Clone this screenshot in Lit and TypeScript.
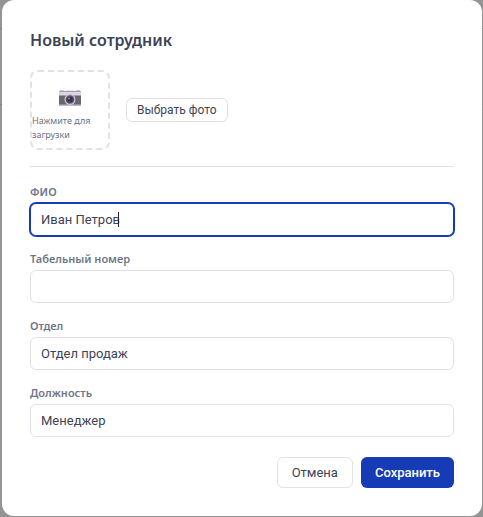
import { LitElement, html, css } from "lit";
import { customElement, property, query, state } from "lit/decorators.js";

interface Field {
  id: string;
  label: string;
  value: string;
}

@customElement("text-field")
class TextField extends LitElement {
  static styles = css`
    :host {
      display: block;
    }
    .label {
      display: block;
      margin-bottom: 2px;
      font-family: "Noto Sans", sans-serif;
      font-size: 11px;
      font-weight: 600;
      line-height: 18px;
      color: #6f7689;
    }
    .box {
      position: relative;
    }
    .input {
      display: block;
      box-sizing: border-box;
      width: 100%;
      height: 33px;
      padding: 0 10px;
      border: 1px solid #e1e1e8;
      border-radius: 6px;
      outline: none;
      background: #fff;
      font-family: Roboto, sans-serif;
      font-size: 13px;
      color: #3c4356;
      caret-color: transparent;
    }
    .input.active {
      border-color: #153cb4;
      box-shadow: 0 0 0 1px #153cb4;
    }
    .caret {
      position: absolute;
      top: 9px;
      width: 1px;
      height: 15px;
      background: #1f2430;
      pointer-events: none;
    }
  `;

  @property() name = "";
  @property() label = "";
  @property() value = "";
  @property({ type: Boolean }) active = false;
  @state() private caretX = 11;
  @query("input") private input!: HTMLInputElement;

  updated() {
    if (!this.active) return;
    const ctx = document.createElement("canvas").getContext("2d");
    if (!ctx) return;
    const style = getComputedStyle(this.input);
    ctx.font = `${style.fontSize} ${style.fontFamily}`;
    const end = this.value.slice(0, this.input.selectionEnd ?? undefined);
    this.caretX = 10 + Math.floor(ctx.measureText(end).width);
  }

  private sync = () => {
    this.value = this.input.value;
    this.requestUpdate();
  };

  render() {
    return html`
      <label class="label" for=${this.name}>${this.label}</label>
      <div class="box">
        <input
          class="input ${this.active ? "active" : ""}"
          id=${this.name}
          type="text"
          autocomplete="off"
          .value=${this.value}
          @input=${this.sync}
          @keyup=${this.sync}
          @focus=${() => (this.active = true)}
          @blur=${() => (this.active = false)}
        />
        ${this.active
          ? html`<span class="caret" style="left:${this.caretX}px"></span>`
          : null}
      </div>
    `;
  }
}

@customElement("app-root")
class AppRoot extends LitElement {
  static styles = css`
    :host {
      display: block;
      box-sizing: border-box;
      min-height: 100vh;
      padding: 0 1px 1px 2px;
      background: linear-gradient(
        #949494 28px,
        #858585 28px 29px,
        #949494 29px 104px,
        #858585 104px 105px,
        #949494 105px
      );
    }
    .dialog {
      padding: 28px;
      border-radius: 12px;
      background: #fff;
      color: #3c4356;
      font-family: "Noto Sans", sans-serif;
    }
    .title {
      margin: 0 0 18px;
      font-size: 16px;
      font-weight: 600;
      line-height: 24px;
    }
    .photo {
      display: flex;
      align-items: center;
      gap: 16px;
      padding-bottom: 16px;
      margin-bottom: 16px;
      border-bottom: 1px solid #e1e1e8;
    }
    .drop {
      display: flex;
      flex-direction: column;
      align-items: center;
      justify-content: center;
      gap: 2px;
      box-sizing: border-box;
      width: 80px;
      height: 80px;
      padding: 6px 0 0;
      border: 2px dashed #e1e1e8;
      border-radius: 8px;
      background: #fff;
      color: #6b7085;
      font-family: "Noto Sans", sans-serif;
      font-size: 9px;
      line-height: 14px;
      text-align: left;
    }
    .camera {
      width: 24px;
      height: 28px;
    }
    .hint {
      width: 100%;
    }
    .fields {
      display: grid;
      gap: 14px;
    }
    .actions {
      display: flex;
      justify-content: flex-end;
      gap: 8px;
      margin-top: 20px;
    }
    .btn {
      height: 31px;
      padding: 0 14px;
      border: 1px solid #e1e1e8;
      border-radius: 6px;
      background: #fff;
      color: #3c4356;
      font-family: Roboto, sans-serif;
      font-size: 13px;
    }
    .btn.small {
      height: 24px;
      padding: 0 10px;
      font-size: 12px;
    }
    .btn.primary {
      border: none;
      background: #153cb4;
      color: #fff;
      font-weight: 500;
    }
  `;

  private fields: Field[] = [
    { id: "name", label: "ФИО", value: "Иван Петров" },
    { id: "number", label: "Табельный номер", value: "" },
    { id: "department", label: "Отдел", value: "Отдел продаж" },
    { id: "position", label: "Должность", value: "Менеджер" },
  ];

  render() {
    return html`
      <form
        class="dialog"
        role="dialog"
        aria-labelledby="title"
        @submit=${(e: Event) => e.preventDefault()}
      >
        <h1 class="title" id="title">Новый сотрудник</h1>
        <div class="photo">
          <button class="drop" type="button">
            <svg class="camera" viewBox="0 0 24 28" aria-hidden="true">
              <path d="M2 6h4v2H2zM18 6h4v2h-4z" fill="#c9c4d3" />
              <path d="M8 6h8l1 3H7z" fill="#e6e0ee" />
              <rect x="1" y="7" width="22" height="15" rx="1" fill="#69656f" />
              <path d="M1 7.500h22v4H1z" fill="#dcd6e4" />
              <path d="M1 20.500h22v1.500H1z" fill="#c3b3d3" />
              <circle cx="12" cy="15.500" r="5.500" fill="#c9c3d2" />
              <circle cx="12" cy="15.500" r="4.300" fill="#5a5466" />
              <circle cx="12" cy="15.500" r="2.800" fill="#38324a" />
              <circle cx="11" cy="14.500" r="1" fill="#8d84a0" />
            </svg>
            <span class="hint">Нажмите для загрузки</span>
          </button>
          <button class="btn small" type="button">Выбрать фото</button>
        </div>
        <div class="fields">
          ${this.fields.map(
            (f, i) => html`<text-field
              .name=${f.id}
              .label=${f.label}
              .value=${f.value}
              .active=${i === 0}
            ></text-field>`
          )}
        </div>
        <div class="actions">
          <button class="btn" type="button">Отмена</button>
          <button class="btn primary" type="submit">Сохранить</button>
        </div>
      </form>
    `;
  }
}
